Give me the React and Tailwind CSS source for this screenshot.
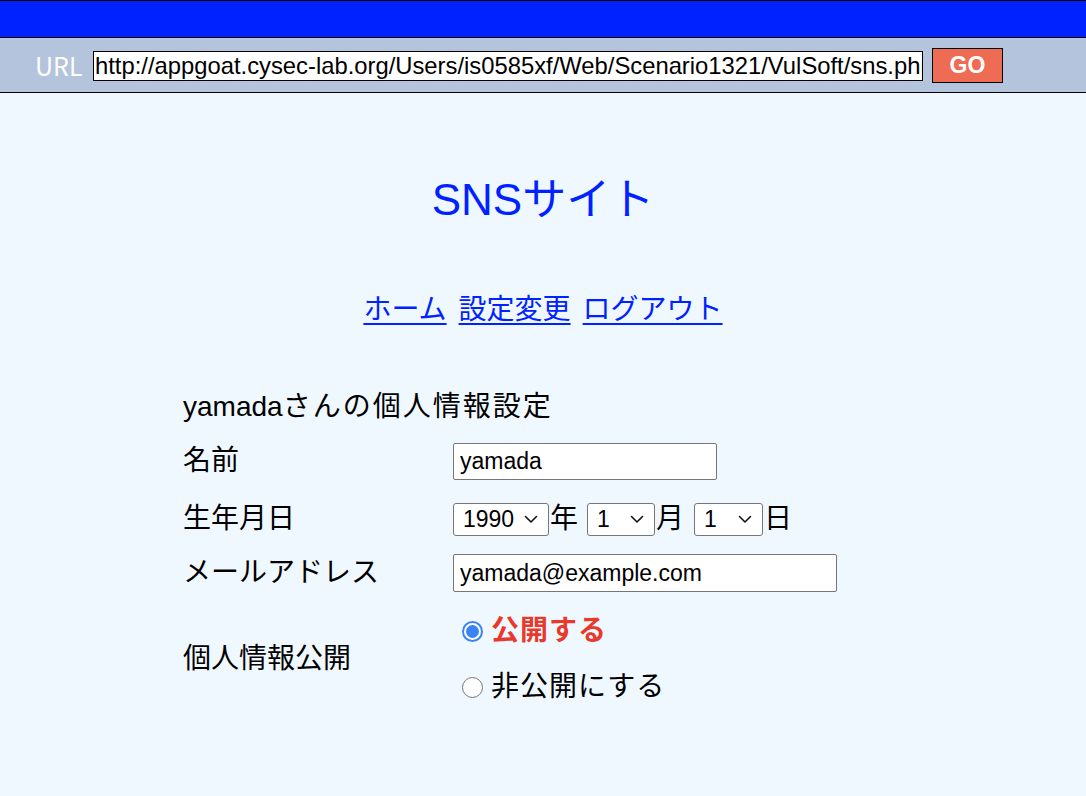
import React from "react";

const FONT = "[font-family:'Liberation_Sans','Noto_Sans_CJK_JP',sans-serif]";

function Chevron() {
  return (
    <svg width="14" height="9" viewBox="0 0 14 9" className="shrink-0">
      <path d="M1.5 1.5 L7 7 L12.5 1.5" fill="none" stroke="#111" strokeWidth="1.6" strokeLinecap="round" strokeLinejoin="round" />
    </svg>
  );
}

function Select({ value, width }) {
  return (
    <div
      className={`flex h-[33px] items-center justify-between rounded-[3px] border border-[#767676] bg-white pl-[9px] pr-[10px] text-[23px] leading-none text-black ${width}`}
    >
      <span>{value}</span>
      <Chevron />
    </div>
  );
}

function Radio({ checked }) {
  if (checked) {
    return (
      <span className="flex h-[21px] w-[21px] items-center justify-center rounded-full bg-[#3b82f6]">
        <span className="flex h-[17px] w-[17px] items-center justify-center rounded-full bg-white">
          <span className="h-[13px] w-[13px] rounded-full bg-[#3b82f6]" />
        </span>
      </span>
    );
  }
  return <span className="h-[21px] w-[21px] rounded-full border border-[#767676] bg-white" />;
}

export default function App() {
  return (
    <div className={`min-h-[796px] w-full bg-[#f0f8ff] ${FONT}`}>
      <div className="h-[38px] border-y border-black bg-[#0022ff]" />
      <div className="flex h-[55px] items-center border-b border-black bg-[#b4c4dc] pl-[35px]">
        <span className="w-[49px] text-[25px] leading-none text-white [font-family:'Noto_Sans_CJK_JP',sans-serif]">URL</span>
        <div className="ml-[9px] mt-[1px] h-[30px] w-[830px] overflow-hidden border border-black bg-white pl-[1px] text-[23.8px] leading-[28px] whitespace-nowrap text-black">
          http://appgoat.cysec-lab.org/Users/is0585xf/Web/Scenario1321/VulSoft/sns.php
        </div>
        <div className="ml-[9px] flex h-[35px] w-[71px] items-center justify-center border border-black bg-[#ee6b54] text-[23px] font-bold text-white">
          GO
        </div>
      </div>

      <div className="flex flex-col items-center">
        <h1 className="mt-[82px] h-[50px] text-[44px] leading-[50px] text-[#0022ff]">SNSサイト</h1>
        <nav className="mt-[69px] flex h-[32px] gap-[12px] text-[28px] leading-[32px] text-[#0022ff]">
          <a href="#" className="underline underline-offset-[4px]">ホーム</a>
          <a href="#" className="underline underline-offset-[4px]">設定変更</a>
          <a href="#" className="underline underline-offset-[4px]">ログアウト</a>
        </nav>
      </div>

      <div className="ml-[183px] mt-[58px] text-[28px] text-black">
        <div className="flex h-[46px] items-center">
          yamada<span className="tracking-[2px]">さんの個人情報設定</span>
        </div>

        <div className="flex h-[62px] items-center">
          <div className="w-[270px]">名前</div>
          <div className="flex h-[37px] w-[264px] items-center rounded-[2px] border border-[#767676] bg-white pl-[6px] text-[23px]">
            yamada
          </div>
        </div>

        <div className="flex h-[54px] items-center">
          <div className="w-[270px]">生年月日</div>
          <div className="flex items-center">
            <Select value="1990" width="w-[96px]" />
            <span className="ml-[1px]">年</span>
            <span className="ml-[9px]">
              <Select value="1" width="w-[68px]" />
            </span>
            <span className="ml-[1px]">月</span>
            <span className="ml-[10px]">
              <Select value="1" width="w-[69px]" />
            </span>
            <span className="ml-[1px]">日</span>
          </div>
        </div>

        <div className="flex h-[54px] items-center">
          <div className="w-[270px]">メールアドレス</div>
          <div className="flex h-[38px] w-[384px] items-center rounded-[2px] border border-[#767676] bg-white pl-[6px] text-[23px]">
            yamada@example.com
          </div>
        </div>

        <div className="mt-[3px] flex items-center">
          <div className="w-[270px]">個人情報公開</div>
          <div className="flex flex-col pl-[9px]">
            <label className="flex h-[56px] items-center gap-[8px]">
              <Radio checked />
              <span className="font-bold tracking-[1px] text-[#e8392a]">公開する</span>
            </label>
            <label className="flex h-[56px] items-center gap-[8px]">
              <Radio />
              <span className="tracking-[1px]">非公開にする</span>
            </label>
          </div>
        </div>
      </div>
    </div>
  );
}
